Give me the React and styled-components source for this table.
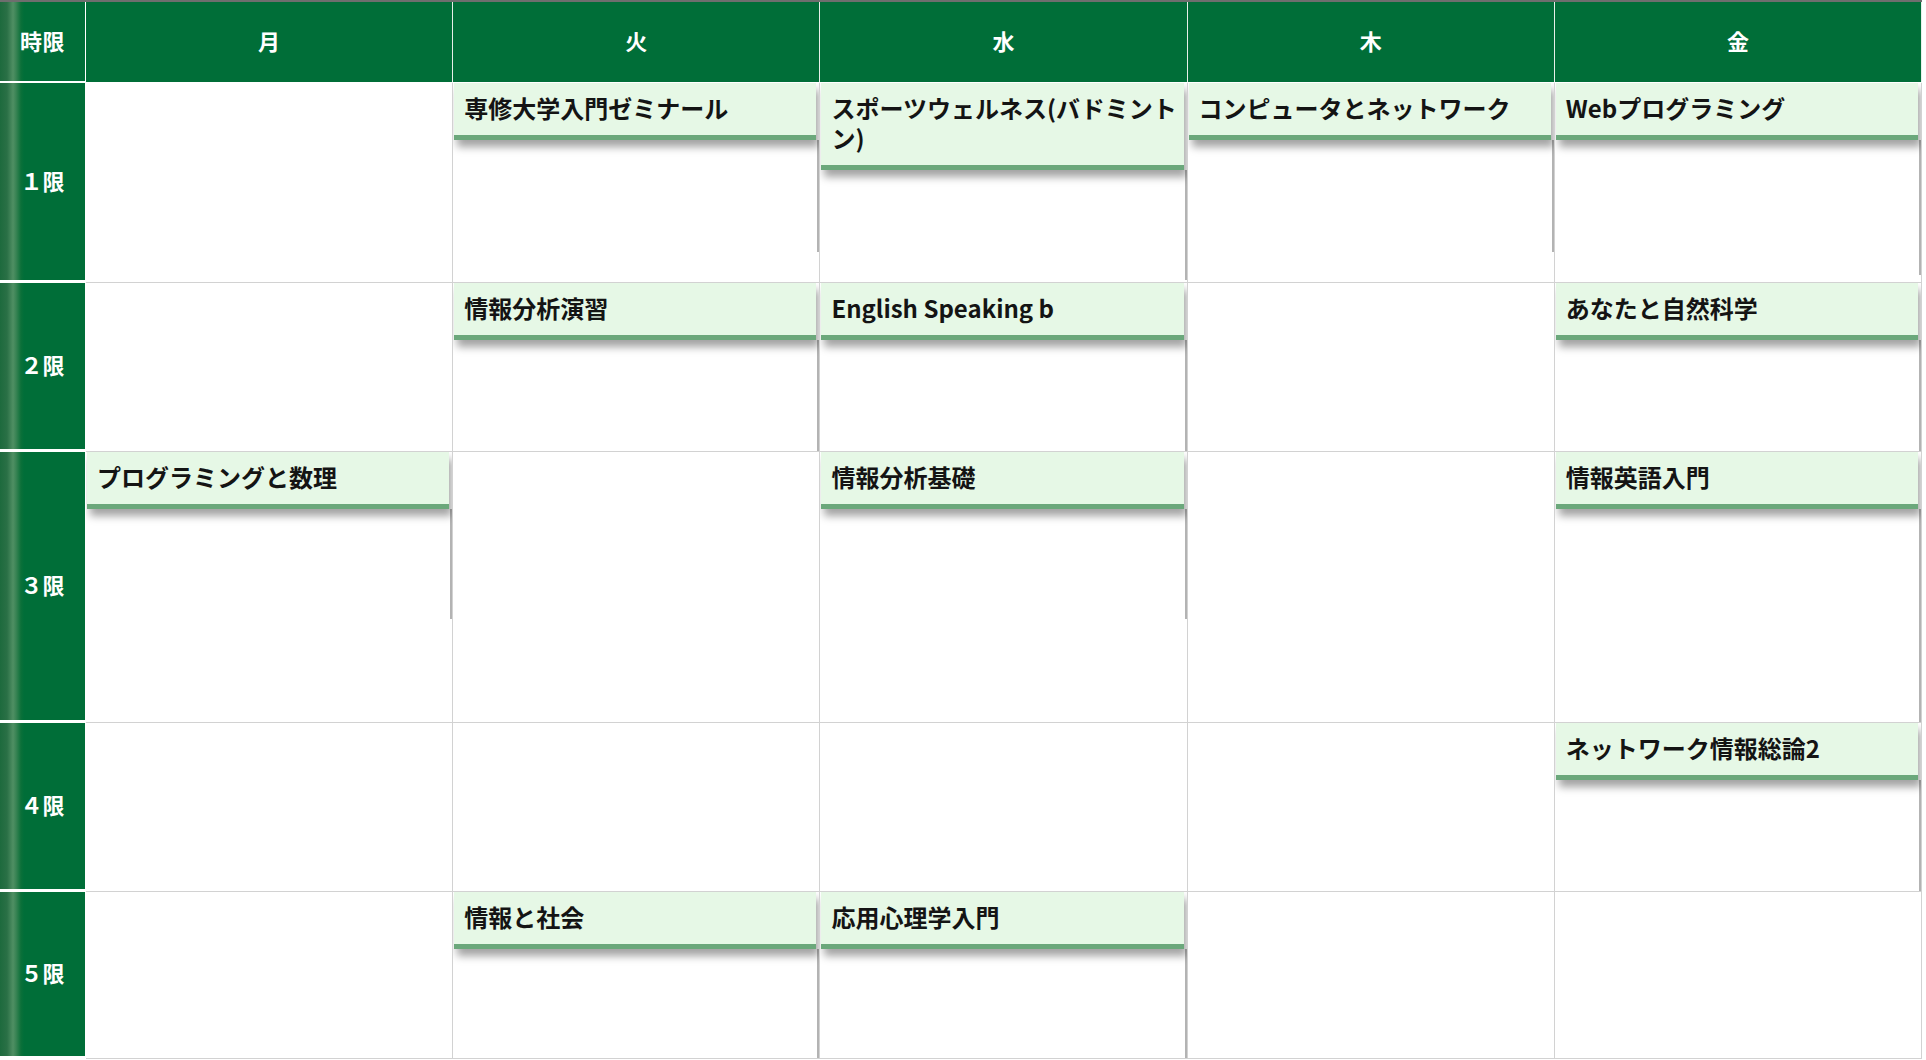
import React from "react";
import styled, { createGlobalStyle } from "styled-components";

const GlobalStyle = createGlobalStyle`
  html, body { margin: 0; padding: 0; background: #ffffff; }
  body { font-family: "Noto Sans CJK JP", "Noto Sans", sans-serif; }
`;

const Page = styled.div`
  width: 1922px;
  border-top: 2px solid #6e6e6e;
  background: #fff;
`;

const Grid = styled.div`
  display: grid;
  grid-template-columns: 86px repeat(5, 1fr);
  grid-template-rows: 81px 200px 169px 271px 169px 167px;
`;

const greenStripe = `
  background: linear-gradient(
    to right,
    #1d6a3d 0px,
    #2a7046 7px,
    #4f8f63 13px,
    #3a8455 16px,
    #0b7039 21px,
    #006e38 24px,
    #006e38 100%
  );
`;

const CornerCell = styled.div`
  ${greenStripe}
  border-right: 1px solid #ffffff;
  border-bottom: 2px solid #ffffff;
  padding-bottom: 4px;
  display: flex;
  align-items: center;
  justify-content: center;
  color: #fff;
  font: 700 22px/1 "Noto Sans CJK JP", sans-serif;
  letter-spacing: 0.5px;
`;

const DayHead = styled.div`
  background: #006e38;
  border-right: 1px solid #e8efe9;
  border-bottom: 1px solid #ffffff;
  padding-bottom: 4px;
  display: flex;
  align-items: center;
  justify-content: center;
  color: #fff;
  font: 700 22px/1 "Noto Sans CJK JP", sans-serif;
`;

const PeriodCell = styled.div`
  ${greenStripe}
  border-right: 1px solid #ffffff;
  border-bottom: 3px solid #ffffff;
  padding-bottom: 4px;
  display: flex;
  align-items: center;
  justify-content: center;
  color: #fff;
  font: 700 22px/1 "Noto Sans CJK JP", sans-serif;
`;

const DayCell = styled.div`
  background: #fff;
  border-right: 1px solid #d2d2d2;
  border-bottom: 1px solid #d2d2d2;
  overflow: hidden;
  display: flex;
  flex-direction: column;
  padding: 0 0 0 1px;
`;

const Card = styled.div`
  position: relative;
  z-index: 1;
  margin-right: 3px;
  padding: 10px 4px 12px 10px;
  background: #e6f8e6;
  border-bottom: 5px solid #6ba87b;
  box-shadow: 3px 7px 8px rgba(0, 0, 0, 0.36);
  color: #141414;
  font: 700 24px/30px "Noto Sans CJK JP", sans-serif;
  word-break: break-all;
`;

const CardBody = styled.div`
  height: ${(p) => p.$h}px;
  border-right: 2px solid #b3b3b3;
  background: #fff;
`;

const days = ["月", "火", "水", "木", "金"];

const periods = [
  {
    label: "１限",
    cells: [
      null,
      { title: "専修大学入門ゼミナール", body: 112 },
      { title: "スポーツウェルネス(バドミントン)", body: 110 },
      { title: "コンピュータとネットワーク", body: 112 },
      { title: "Webプログラミング", body: 135 },
    ],
  },
  {
    label: "２限",
    cells: [
      null,
      { title: "情報分析演習", body: 112 },
      { title: "English Speaking b", body: 112 },
      null,
      { title: "あなたと自然科学", body: 112 },
    ],
  },
  {
    label: "３限",
    cells: [
      { title: "プログラミングと数理", body: 110 },
      null,
      { title: "情報分析基礎", body: 110 },
      null,
      { title: "情報英語入門", body: 214 },
    ],
  },
  {
    label: "４限",
    cells: [null, null, null, null, { title: "ネットワーク情報総論2", body: 112 }],
  },
  {
    label: "５限",
    cells: [
      null,
      { title: "情報と社会", body: 112 },
      { title: "応用心理学入門", body: 112 },
      null,
      null,
    ],
  },
];

export default function App() {
  return (
    <>
      <GlobalStyle />
      <Page>
        <Grid>
          <CornerCell>時限</CornerCell>
          {days.map((d) => (
            <DayHead key={d}>{d}</DayHead>
          ))}
          {periods.map((p) => (
            <React.Fragment key={p.label}>
              <PeriodCell>{p.label}</PeriodCell>
              {p.cells.map((c, i) => (
                <DayCell key={i}>
                  {c && (
                    <>
                      <Card>{c.title}</Card>
                      <CardBody $h={c.body} />
                    </>
                  )}
                </DayCell>
              ))}
            </React.Fragment>
          ))}
        </Grid>
      </Page>
    </>
  );
}
